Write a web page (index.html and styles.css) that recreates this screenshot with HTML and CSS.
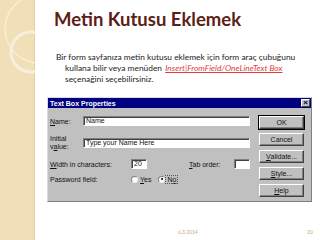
FILE: index.html
```html
<!DOCTYPE html>
<html>
<head>
<meta charset="utf-8">
<link rel="stylesheet" href="styles.css">
</head>
<body>
<div class="slide">
  <aside class="side">
    <svg width="35" height="240" viewBox="0 0 35 240">
      <circle cx="39" cy="29" r="34" fill="none" stroke="#f8f0dc" stroke-width="1.2"/>
      <circle cx="31" cy="52" r="20" fill="none" stroke="#f7efdd" stroke-width="3"/>
    </svg>
  </aside>
  <main class="main">
    <h1 class="title">Metin Kutusu Eklemek</h1>
    <p class="body">Bir form sayfanıza metin kutusu eklemek için form araç çubuğunu kullana bilir veya menüden <span class="link">Insert|FromField/OneLineText Box</span> seçenağini seçebilirsiniz.</p>
    <div class="dialog">
      <div class="titlebar">
        <span class="dtitle">Text Box Properties</span>
        <span class="close">×</span>
      </div>
      <div class="dbody">
        <div class="form">
          <div class="row r-name">
            <span class="lbl w33"><u>N</u>ame:</span>
            <span class="field wide">Name</span>
          </div>
          <div class="row r-init">
            <span class="lbl w33 two">Initial<br>v<u>a</u>lue:</span>
            <span class="field wide">Type your Name Here</span>
          </div>
          <div class="row r-width">
            <span class="lbl w81"><u>W</u>idth in characters:</span>
            <span class="field small">20</span>
            <span class="lbl tab"><u>T</u>ab order:</span>
            <span class="field small2"></span>
          </div>
          <div class="row r-pass">
            <span class="lbl w81">Password field:</span>
            <span class="radio"></span><span class="opt"><u>Y</u>es</span>
            <span class="radio on"></span><span class="opt focus">N<u>o</u></span>
          </div>
        </div>
        <div class="buttons">
          <span class="btn def">OK</span>
          <span class="btn">Cancel</span>
          <span class="btn"><u>V</u>alidate...</span>
          <span class="btn"><u>S</u>tyle...</span>
          <span class="btn"><u>H</u>elp</span>
        </div>
      </div>
    </div>
    <footer class="foot">
      <span class="date">6.3.2014</span>
      <span class="num">20</span>
    </footer>
  </main>
</div>
</body>
</html>
```

FILE: styles.css
```css
* { box-sizing: border-box; }
html, body { margin: 0; padding: 0; background: #fff; }
.slide {
  width: 320px; height: 240px; overflow: hidden;
  display: flex;
}
.side {
  width: 35px; height: 240px; flex: none;
  background: #f1dfb7;
  border-right: 1px solid #e6cf9f;
}
.side svg { display: block; }
.main {
  flex: 1; display: flex; flex-direction: column;
  font-family: Lato, "Open Sans", sans-serif;
}
.title {
  margin: 0; padding: 7px 0 0 19px;
  font-size: 18.5px; line-height: 24px; font-weight: 700;
  color: #5b2116;
}
.body {
  margin: 21px 0 0 0;
  padding-left: 30px; padding-right: 18px;
  text-indent: -9px;
  font-size: 8.4px; line-height: 11px; color: #222;
}
.link { color: #e23b3b; font-style: italic; text-decoration: underline; margin-left: 1px; }
.dialog {
  margin: 12px 0 0 12px;
  width: 265px; height: 105px;
  background: #c0c0c0;
  border: 1px solid #dcdcdc;
  border-right-color: #808080; border-bottom-color: #808080;
  display: flex; flex-direction: column;
  font-family: "Liberation Sans", Arial, sans-serif;
  font-size: 7px; color: #111;
}
.titlebar {
  height: 10px; background: #000080;
  display: flex; align-items: center; justify-content: space-between;
  padding: 0 1px 0 2px;
}
.dtitle { color: #fff; font-weight: 700; font-size: 7px; }
.close {
  width: 9px; height: 8px; background: #c0c0c0;
  border: 1px solid #fff; border-right-color: #404040; border-bottom-color: #404040;
  color: #000; font-size: 8px; line-height: 5px; text-align: center; font-weight: 700;
}
.dbody { flex: 1; display: flex; justify-content: space-between; padding: 8px 7px 0 2px; }
.form { display: flex; flex-direction: column; }
.row { display: flex; align-items: center; }
.r-init { margin-top: 9px; }
.r-width { margin-top: 8px; }
.r-pass { margin-top: 5px; }
.lbl { flex: none; }
.lbl.w33 { width: 33px; }
.lbl.two { line-height: 8px; }
.lbl.w81 { width: 81px; }
.lbl.tab { width: 45px; margin-left: 42px; }
.field {
  height: 10px; background: #fff;
  border: 1px solid #808080; border-right-color: #fff; border-bottom-color: #fff;
  box-shadow: inset 1px 1px 0 #404040;
  padding-left: 2px; line-height: 8px; font-size: 7px;
}
.field.wide { width: 167px; }
.field.small { width: 16px; }
.field.small2 { width: 16px; }
.r-pass { height: 10px; }
.radio {
  width: 7px; height: 7px; border-radius: 50%;
  background: #fff; border: 1px solid #808080;
  border-right-color: #f0f0f0; border-bottom-color: #f0f0f0;
  display: inline-flex; align-items: center; justify-content: center;
  margin-right: 1px;
}
.radio.on::after { content: ""; width: 2px; height: 2px; background: #000; border-radius: 50%; }
.opt { margin-right: 6px; padding: 0 1px; }
.opt.focus { outline: 1px dotted #555; }
.buttons { display: flex; flex-direction: column; gap: 4px; width: 45px; }
.btn {
  height: 13px; display: flex; align-items: center; justify-content: center;
  background: #c0c0c0;
  border: 1px solid #fff; border-right-color: #404040; border-bottom-color: #404040;
  box-shadow: inset -1px -1px 0 #808080;
}
.btn.def { outline: 1px solid #000; }
.foot {
  margin-top: 26px; height: 8px; position: relative;
  font-size: 5px; color: #c4ad83; line-height: 8px;
}
.date { position: absolute; left: 143px; }
.num { position: absolute; left: 272px; }
```
